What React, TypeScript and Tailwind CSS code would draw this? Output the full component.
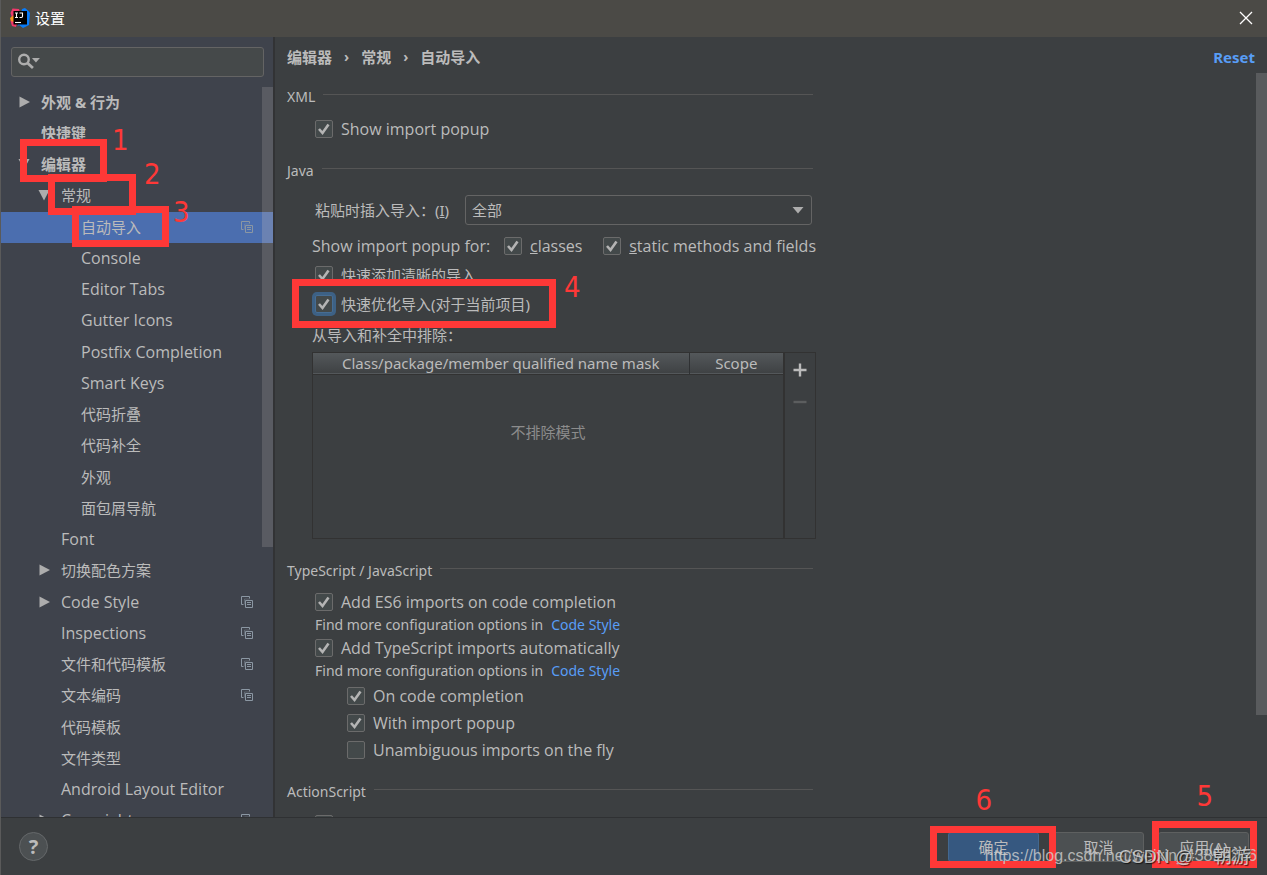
import React, { useState } from "react";

type TreeItem = {
  label: string;
  level: 0 | 1 | 2;
  arrow?: "open" | "closed";
  copy?: boolean;
  selected?: boolean;
};

const items: TreeItem[] = [
  { label: "外观 & 行为", level: 0, arrow: "closed" },
  { label: "快捷键", level: 0 },
  { label: "编辑器", level: 0, arrow: "open" },
  { label: "常规", level: 1, arrow: "open" },
  { label: "自动导入", level: 2, copy: true, selected: true },
  { label: "Console", level: 2 },
  { label: "Editor Tabs", level: 2 },
  { label: "Gutter Icons", level: 2 },
  { label: "Postfix Completion", level: 2 },
  { label: "Smart Keys", level: 2 },
  { label: "代码折叠", level: 2 },
  { label: "代码补全", level: 2 },
  { label: "外观", level: 2 },
  { label: "面包屑导航", level: 2 },
  { label: "Font", level: 1 },
  { label: "切换配色方案", level: 1, arrow: "closed" },
  { label: "Code Style", level: 1, arrow: "closed", copy: true },
  { label: "Inspections", level: 1, copy: true },
  { label: "文件和代码模板", level: 1, copy: true },
  { label: "文本编码", level: 1, copy: true },
  { label: "代码模板", level: 1 },
  { label: "文件类型", level: 1 },
  { label: "Android Layout Editor", level: 1 },
  { label: "Copyright", level: 1, arrow: "closed", copy: true },
];

const indent = {
  0: "pl-[17px] font-bold",
  1: "pl-[37px]",
  2: "pl-[57px]",
};

// Latin labels are set one step larger than Chinese ones.
const latin = "font-['Open_Sans',sans-serif] text-[16px] leading-5";

function isLatin(text: string) {
  return /^[\x20-\x7e]+$/.test(text);
}

function AppIcon() {
  return (
    <svg width="20" height="20" viewBox="0 0 20 20" aria-hidden="true">
      <path d="M2.500 .5 9 1l2 6-4 8-1 4-4-1-1.500-5 1-5L.5 5z" fill="#f0386b" />
      <path d="M0 10 4 7v7l-3-1z" fill="#f7941e" />
      <path d="M12 1 15 0l3.500 3L20 5l-1 12-6 3-4-3-1.500 1.500L10 9z" fill="#087cfa" />
      <rect x="3.500" y="3" width="13.500" height="13.500" fill="#000" />
      <path d="M5 5h3M6.500 5v4M5 9.500h3M9.500 5h3v3.300q0 1.200-1.200 1.200H9.500" stroke="#fff" strokeWidth="1.100" fill="none" />
      <path d="M5 14.500h6" stroke="#fff" strokeWidth="1.100" />
    </svg>
  );
}

function Triangle({ open }: { open: boolean }) {
  return (
    <svg width="12" height="12" viewBox="0 0 12 12" fill="#adadad" aria-hidden="true">
      <path d={open ? "M.5 1h11L6 11.5z" : "M1.500 .5 12 6 1.500 11.500z"} />
    </svg>
  );
}

function CopyIcon() {
  return (
    <svg width="12" height="12" viewBox="0 0 12 12" fill="none" stroke="#8b97a3" aria-hidden="true">
      <path d="M2.500 8.500h-2v-8h8v2" />
      <path d="M3.500 8.500v-5.500h5" strokeOpacity=".4" />
      <path d="M4.500 4.500h7v7h-7z" />
      <path d="M6 6.500h4M6 8.500h4" />
    </svg>
  );
}

function Check({
  children,
  checked = true,
  focused = false,
  chinese = false,
}: {
  children?: React.ReactNode;
  checked?: boolean;
  focused?: boolean;
  chinese?: boolean;
}) {
  const [on, setOn] = useState(checked);
  return (
    <label className="flex items-center gap-2 whitespace-nowrap">
      <span className="grid shrink-0">
        <input
          type="checkbox"
          aria-label={children ? undefined : "ActionScript"}
          checked={on}
          onChange={(e) => setOn(e.target.checked)}
          className={
            "col-start-1 row-start-1 size-[18px] appearance-none rounded-[2px] border bg-[#43494a] outline-none " +
            (focused ? "border-[#466d94] ring-3 ring-[#3d6185]" : "border-[#6b6b6b]")
          }
        />
        {on && (
          <svg className="pointer-events-none col-start-1 row-start-1" width="18" height="18" viewBox="0 0 18 18" fill="none" aria-hidden="true">
            <path d="M4 9 7.500 13 13.500 4.500" stroke="#b4b4b4" strokeWidth="2.600" />
          </svg>
        )}
      </span>
      <span className={chinese ? "" : latin}>{children}</span>
    </label>
  );
}

function SectionTitle({ children }: { children: React.ReactNode }) {
  return (
    <div className="flex h-[38px] items-center gap-2 pr-[3px]">
      <h2 className="text-sm">{children}</h2>
      <div className="mb-1.5 h-px grow bg-[#555555]" />
    </div>
  );
}

function Hint() {
  return (
    <p className="flex h-[22px] items-center gap-2 pl-7 text-sm whitespace-nowrap">
      Find more configuration options in{" "}
      <a href="#code-style" className="text-[#589df6]">
        Code Style
      </a>
    </p>
  );
}

function Mark({ box, digit, n }: { box: string; digit: string; n: number }) {
  return (
    <>
      <div className={"pointer-events-none absolute border-[7px] border-[#fe3837] " + box} />
      <span
        className={
          "pointer-events-none absolute font-['DejaVu_Sans_Condensed','DejaVu_Sans',sans-serif] text-[29px] leading-[30px] text-[#fe3837] " +
          digit
        }
      >
        {n}
      </span>
    </>
  );
}

export default function App() {
  return (
    <div className="relative flex h-screen flex-col overflow-hidden border-l border-[#5a5a5a] bg-[#3c3f41] font-['Noto_Sans','Noto_Sans_CJK_SC',sans-serif] text-[15px] leading-5 text-[#bbbbbb]">
      <header className="flex h-[37px] shrink-0 items-center gap-[5px] bg-[#4b4a46] pr-3.5 pb-0.5 pl-[9px] text-white">
        <AppIcon />
        <h1 className="grow">设置</h1>
        <button aria-label="Close">
          <svg width="14" height="14" viewBox="0 0 14 14" stroke="#fff" strokeWidth="1.300" aria-hidden="true">
            <path d="M1 1l12 12M13 1 1 13" />
          </svg>
        </button>
      </header>

      <div className="flex min-h-0 grow">
        <aside className="flex w-[274px] shrink-0 flex-col border-r-2 border-[#323335] bg-[#3f434c]">
          <div className="py-2.5 pr-[9px] pl-2.5">
            <label className="flex h-[30px] items-center rounded-[3px] border border-[#646464] bg-[#45494a] pl-1.5">
              <svg width="24" height="18" viewBox="0 0 24 18" fill="none" aria-hidden="true">
                <circle cx="6" cy="6.500" r="4.800" stroke="#adadad" strokeWidth="2.400" />
                <path d="m9.500 10 5.500 5" stroke="#adadad" strokeWidth="2.800" />
                <path d="M14 5h8l-4 4.500z" fill="#adadad" />
              </svg>
              <input aria-label="Search" className="min-w-0 grow bg-transparent outline-none" />
            </label>
          </div>
          <div className="flex min-h-0 grow overflow-hidden">
            <ul className="min-w-0 grow">
              {items.map((it) => (
                <li
                  key={it.label}
                  className={
                    "flex h-[31px] items-center pr-[9px] pb-0.5 nth-[4n]:mb-px " +
                    indent[it.level] +
                    (it.selected ? " bg-[#4b6eaf]" : "")
                  }
                >
                  <span className="w-[23px] shrink-0">{it.arrow && <Triangle open={it.arrow === "open"} />}</span>
                  <span className={"grow whitespace-nowrap " + (isLatin(it.label) ? latin : "")}>{it.label}</span>
                  {it.copy && <CopyIcon />}
                </li>
              ))}
            </ul>
            <div className="w-[11px] shrink-0">
              <div className="h-[125px] bg-[#595b62]" />
              <div className="h-[31px] bg-[#6b82b2]" />
              <div className="h-[304px] bg-[#595b62]" />
            </div>
          </div>
        </aside>

        <main className="flex min-w-0 grow flex-col">
          <div className="flex h-9 shrink-0 items-center justify-between px-3 pt-1 font-bold">
            <nav className="flex items-center gap-3">
              <span>编辑器</span>
              <span className="text-sm">›</span>
              <span>常规</span>
              <span className="text-sm">›</span>
              <span>自动导入</span>
            </nav>
            <button className="text-[#589df6]">Reset</button>
          </div>
          <div className="flex min-h-0 grow justify-between overflow-hidden">
            <div className="w-[541px] pt-[5px] pl-3">
              <SectionTitle>XML</SectionTitle>
              <div className="flex h-[26px] items-center pl-7">
                <Check>Show import popup</Check>
              </div>

              <div className="mt-2.5">
                <SectionTitle>Java</SectionTitle>
                <div className="flex h-[39px] items-center pr-1 pl-7">
                  <label htmlFor="paste" className="w-[150px]">
                    粘贴时插入导入：(<u>I</u>)
                  </label>
                  <div className="grid grow items-center">
                    <select
                      id="paste"
                      className="col-start-1 row-start-1 h-[30px] appearance-none rounded-[3px] border border-[#646464] bg-[#3c3f41] pl-1.5 outline-none"
                    >
                      <option>全部</option>
                    </select>
                    <svg className="pointer-events-none col-start-1 row-start-1 mr-2 justify-self-end" width="12" height="8" viewBox="0 0 12 8" fill="#adadad" aria-hidden="true">
                      <path d="M.5 1h11L6 7.500z" />
                    </svg>
                  </div>
                </div>
                <div className="flex h-[33px] items-center pl-[25px] whitespace-nowrap">
                  <span className={"w-[192px] " + latin}>Show import popup for:</span>
                  <Check>
                    <u>c</u>lasses
                  </Check>
                  <div className="ml-auto">
                    <Check>
                      <u>s</u>tatic methods and fields
                    </Check>
                  </div>
                </div>
                <div className="flex h-[26px] items-center pl-7">
                  <Check chinese>快速添加清晰的导入</Check>
                </div>
                <div className="flex h-8 items-center pl-7">
                  <Check chinese focused>快速优化导入(对于当前项目)</Check>
                </div>
                <p className="flex h-8 items-center pb-0.5 pl-[25px]">从导入和补全中排除：</p>
                <div className="ml-[25px] flex h-[187px] border border-[#323232]">
                  <table className="grow table-fixed border-collapse">
                    <thead>
                      <tr className="h-[21px] border-b border-[#323232] bg-linear-to-b from-[#54585b] to-[#3f4244]">
                        <th className="w-[376px] border-r border-[#2f3133] p-0 font-normal">Class/package/member qualified name mask</th>
                        <th className="p-0 font-normal">Scope</th>
                      </tr>
                    </thead>
                    <tbody>
                      <tr>
                        <td colSpan={2} className="pb-12 text-center text-[#8c8c8c]">
                          不排除模式
                        </td>
                      </tr>
                    </tbody>
                  </table>
                  <div className="flex w-8 flex-col items-center gap-[18px] border-l-2 border-[#323232] pt-2.5">
                    <button aria-label="Add">
                      <svg width="14" height="14" viewBox="0 0 14 14" stroke="#bbb" strokeWidth="2.400" aria-hidden="true">
                        <path d="M7 .5v13M.5 7h13" />
                      </svg>
                    </button>
                    <button aria-label="Remove">
                      <svg width="14" height="14" viewBox="0 0 14 14" stroke="#5c5e5f" strokeWidth="2.400" aria-hidden="true">
                        <path d="M.5 7h13" />
                      </svg>
                    </button>
                  </div>
                </div>
              </div>

              <div className="mt-[13px]">
                <SectionTitle>TypeScript / JavaScript</SectionTitle>
                <div className="flex h-6 items-center pl-7">
                  <Check>Add ES6 imports on code completion</Check>
                </div>
                <Hint />
                <div className="flex h-6 items-center pl-7">
                  <Check>Add TypeScript imports automatically</Check>
                </div>
                <Hint />
                <div className="pl-[60px]">
                  <div className="flex h-[27px] items-center">
                    <Check>On code completion</Check>
                  </div>
                  <div className="flex h-[27px] items-center">
                    <Check>With import popup</Check>
                  </div>
                  <div className="flex h-[27px] items-center">
                    <Check checked={false}>Unambiguous imports on the fly</Check>
                  </div>
                </div>
              </div>

              <div className="mt-2.5">
                <SectionTitle>ActionScript</SectionTitle>
                <div className="flex h-[26px] items-center pl-7">
                  <Check />
                </div>
              </div>
            </div>
            <div className="h-[642px] w-[11px] bg-[#595b5d]" />
          </div>
        </main>
      </div>

      <footer className="flex h-[58px] shrink-0 items-center justify-between border-t border-[#2f3133] px-[18px]">
        <button aria-label="Help" className="size-[29px] rounded-full border border-[#65686a] bg-[#4c5052] text-xl leading-6 font-bold">
          ?
        </button>
        <div className="flex gap-3.5">
          <button className="h-[30px] w-[91px] rounded-[3px] border border-[#43688f] bg-[#365880]">确定</button>
          <button className="h-[30px] w-[91px] rounded-[3px] border border-[#5e6060] bg-[#4c5052]">取消</button>
          <button className="h-[30px] w-[91px] rounded-[3px] border border-[#5e6060] bg-[#4c5052]">
            应用(<u>A</u>)
          </button>
        </div>
      </footer>

      <Mark n={1} box="top-[139px] left-[19px] h-[43px] w-[87px]" digit="top-[125px] left-[111px]" />
      <Mark n={2} box="top-[174px] left-[47px] h-[41px] w-[88px]" digit="top-[159px] left-[143px]" />
      <Mark n={3} box="top-[206px] left-[71px] h-[41px] w-[97px]" digit="top-[197px] left-[172px]" />
      <Mark n={4} box="top-[279px] left-[291px] h-[49px] w-[264px]" digit="top-[272px] left-[563px]" />
      <Mark n={5} box="right-[10px] bottom-[7px] h-[47px] w-[105px]" digit="right-[54px] bottom-[64px]" />
      <Mark n={6} box="right-[211px] bottom-[7px] h-[42px] w-[126px]" digit="right-[275px] bottom-[60px]" />
      <span className="pointer-events-none absolute right-2.5 bottom-[7px] font-['Liberation_Sans',sans-serif] text-base text-[#d0d0d0]/80">
        https://blog.csdn.net/weixin_43899266
      </span>
      <span className="pointer-events-none absolute right-4 bottom-2 flex gap-5 font-['Liberation_Sans','Noto_Sans_CJK_SC',sans-serif] text-[19px] leading-5 text-[#dedede]/80 [text-shadow:1px_1px_1px_#000000aa]">
        <span className="text-lg leading-5">CSDN @</span>
        <span>朝游</span>
      </span>
    </div>
  );
}
